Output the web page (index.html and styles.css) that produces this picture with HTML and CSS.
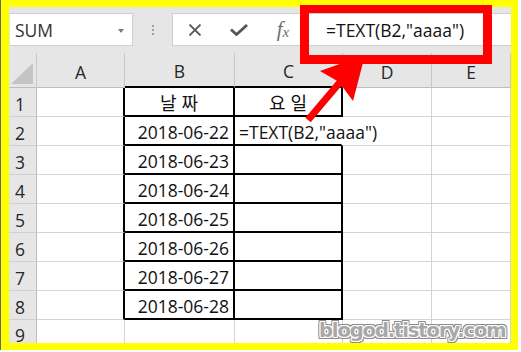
FILE: index.html
```html
<!DOCTYPE html>
<html lang="ko">
<head>
    <meta charset="UTF-8">
    <title>TEXT 함수 요일</title>
    <link rel="stylesheet" href="styles.css">
</head>
<body>
    <div class="frame">
        <div class="toolbar">
            <div class="namebox">
                <span class="name">SUM</span>
                <span class="drop"></span>
            </div>
            <div class="grip"><i></i><i></i><i></i></div>
            <div class="fbar">
                <span class="btn">
                    <svg width="14" height="12" viewBox="0 0 14 12"><path d="M1.5 0.5 L12.5 11.5 M12.5 0.5 L1.5 11.5" stroke="#5a5a5a" stroke-width="1.8" fill="none"/></svg>
                </span>
                <span class="btn">
                    <svg width="18" height="12" viewBox="0 0 18 12"><path d="M1 5.5 L6.5 10.5 L17 1" stroke="#555" stroke-width="2.8" fill="none"/></svg>
                </span>
                <span class="btn fx">f<span class="x">x</span></span>
                <span class="formula">=TEXT(B2,"aaaa")</span>
            </div>
        </div>

        <div class="sheet">
            <div class="h corner">
                <svg width="22" height="21" viewBox="0 0 22 21"><path d="M22 0 L22 21 L0 21 Z" fill="#c4c4c4"/></svg>
            </div>
            <div class="h">A</div>
            <div class="h hb">B</div>
            <div class="h hb">C</div>
            <div class="h">D</div>
            <div class="h">E</div>

            <div class="rh">1</div>
            <div class="c la"></div>
            <div class="c bx mid ko">날 짜</div>
            <div class="c bx mid ko">요 일</div>
            <div class="c"></div>
            <div class="c"></div>

            <div class="rh">2</div>
            <div class="c la"></div>
            <div class="c bx num">2018-06-22</div>
            <div class="c bx edit">=TEXT(B2,"aaaa")</div>
            <div class="c"></div>
            <div class="c"></div>

            <div class="rh">3</div>
            <div class="c la"></div>
            <div class="c bx num">2018-06-23</div>
            <div class="c bx"></div>
            <div class="c"></div>
            <div class="c"></div>

            <div class="rh">4</div>
            <div class="c la"></div>
            <div class="c bx num">2018-06-24</div>
            <div class="c bx"></div>
            <div class="c"></div>
            <div class="c"></div>

            <div class="rh">5</div>
            <div class="c la"></div>
            <div class="c bx num">2018-06-25</div>
            <div class="c bx"></div>
            <div class="c"></div>
            <div class="c"></div>

            <div class="rh">6</div>
            <div class="c la"></div>
            <div class="c bx num">2018-06-26</div>
            <div class="c bx"></div>
            <div class="c"></div>
            <div class="c"></div>

            <div class="rh">7</div>
            <div class="c la"></div>
            <div class="c bx num">2018-06-27</div>
            <div class="c bx"></div>
            <div class="c"></div>
            <div class="c"></div>

            <div class="rh">8</div>
            <div class="c la"></div>
            <div class="c bx num">2018-06-28</div>
            <div class="c bx"></div>
            <div class="c"></div>
            <div class="c"></div>

            <div class="rh">9</div>
            <div class="c"></div>
            <div class="c"></div>
            <div class="c"></div>
            <div class="c"></div>
            <div class="c"></div>
        </div>
    </div>

    <!-- annotations drawn over the screenshot -->
    <div class="redbox"></div>
    <svg class="arrow" width="521" height="352" viewBox="0 0 521 352">
        <path d="M308 120 L341 81" stroke="#f00" stroke-width="7" fill="none"/>
        <path d="M365 55 L320 71 L339 82 L353 101 Z" fill="#f00"/>
    </svg>
    <div class="mark">blogod.tistory.com</div>
</body>
</html>
```

FILE: styles.css
```css
body {
    margin: 0;
    width: 521px;
    height: 352px;
    background: #fff;
    position: relative;
    overflow: hidden;
    font-family: "Open Sans", "Noto Sans CJK KR", sans-serif;
    color: #111;
}
.frame {
    width: 502px;
    height: 336px;
    margin-left: 1px;
    border-style: solid;
    border-color: #ffff00;
    border-width: 7px 7px 7px 8px;
    box-shadow: -1px 0 0 #666;
    overflow: hidden;
}

/* formula bar */
.toolbar {
    height: 46px;
    background: #e6e6e6;
    display: flex;
    align-items: flex-start;
    padding-top: 6px;
    box-sizing: border-box;
}
.namebox {
    width: 123px;
    height: 33px;
    margin-left: 1px;
    background: #fff;
    border: 1px solid #cfcfcf;
    border-left: none;
    box-sizing: border-box;
    display: flex;
    align-items: center;
    justify-content: space-between;
    padding: 1px 8px 0 5px;
}
.name {
    font-size: 17.5px;
    color: #333;
}
.drop {
    width: 0;
    height: 0;
    border-left: 3.5px solid transparent;
    border-right: 3.5px solid transparent;
    border-top: 4px solid #7a7a7a;
    margin-top: 2px;
}
.grip {
    width: 39px;
    height: 33px;
    display: flex;
    flex-direction: column;
    align-items: center;
    justify-content: center;
    gap: 2px;
}
.grip i {
    width: 2px;
    height: 2px;
    background: #a0a0a0;
}
.fbar {
    flex: 1;
    height: 33px;
    background: #fff;
    border: 1px solid #cfcfcf;
    border-right: none;
    box-sizing: border-box;
    display: flex;
    align-items: center;
}
.btn {
    width: 44px;
    display: flex;
    justify-content: center;
    align-items: center;
    padding-top: 1px;
}
.fx {
    font-family: "Liberation Serif", serif;
    font-style: italic;
    font-size: 21px;
    color: #6e6e6e;
    padding-top: 0;
}
.fx .x {
    font-size: 15px;
    margin-top: 5px;
}
.formula {
    padding-left: 21px;
    font-size: 17.5px;
    color: #111;
    white-space: nowrap;
}

/* grid */
.sheet {
    display: grid;
    grid-template-columns: 28px 88px 110px 108px 89px 79px;
    grid-template-rows: 35px repeat(8, 29px) 1fr;
    height: 290px;
}
.h, .rh, .c {
    box-sizing: border-box;
    display: flex;
    align-items: center;
    font-size: 17.5px;
}
.h {
    background: #e6e6e6;
    border-right: 1px solid #c8c8c8;
    border-bottom: 1px solid #bdbdbd;
    justify-content: center;
    padding-top: 3px;
    color: #262626;
}
.corner {
    align-items: flex-end;
    justify-content: flex-end;
    padding: 0 3px 3px 0;
}
.hb {
    border-bottom: 2px solid #000;
}
.rh {
    background: #e6e6e6;
    border-right: 1px solid #bdbdbd;
    border-bottom: 1px solid #d0d0d0;
    padding: 3px 0 0 6px;
    color: #262626;
}
.c {
    border-right: 1px solid #d4d4d4;
    border-bottom: 1px solid #d4d4d4;
    padding: 3px 4px 0;
    white-space: nowrap;
    color: #111;
}
.la {
    border-right: 2px solid #000;
}
.bx {
    border-right: 2px solid #000;
    border-bottom: 2px solid #000;
}
.num {
    justify-content: flex-end;
}
.mid {
    justify-content: center;
}
.ko {
    font-family: "Noto Sans CJK KR", sans-serif;
    font-size: 18px;
    padding-top: 1px;
}
.edit {
    border-right-color: transparent;
    overflow: visible;
    position: relative;
    z-index: 1;
}

/* red marks and watermark */
.redbox {
    position: absolute;
    left: 300px;
    top: 5px;
    width: 174px;
    height: 42px;
    border: 9px solid #f00;
    border-top-width: 8px;
}
.arrow {
    position: absolute;
    left: 0;
    top: 0;
}
.mark {
    position: absolute;
    left: 319px;
    top: 319px;
    font-family: "DejaVu Sans", sans-serif;
    font-weight: bold;
    font-size: 19.5px;
    letter-spacing: -1.1px;
    color: #a8a8a8;
    text-shadow:
        1px 0 0 #fff, -1px 0 0 #fff, 0 1px 0 #fff, 0 -1px 0 #fff,
        1px 1px 0 #fff, -1px -1px 0 #fff, 1px -1px 0 #fff, -1px 1px 0 #fff,
        2px 0 0 #8a8a8a, -2px 0 0 #8a8a8a, 0 2px 0 #8a8a8a, 0 -2px 0 #8a8a8a,
        2px 2px 0 #8a8a8a, -2px -2px 0 #8a8a8a, 2px -2px 0 #8a8a8a, -2px 2px 0 #8a8a8a;
}
```
